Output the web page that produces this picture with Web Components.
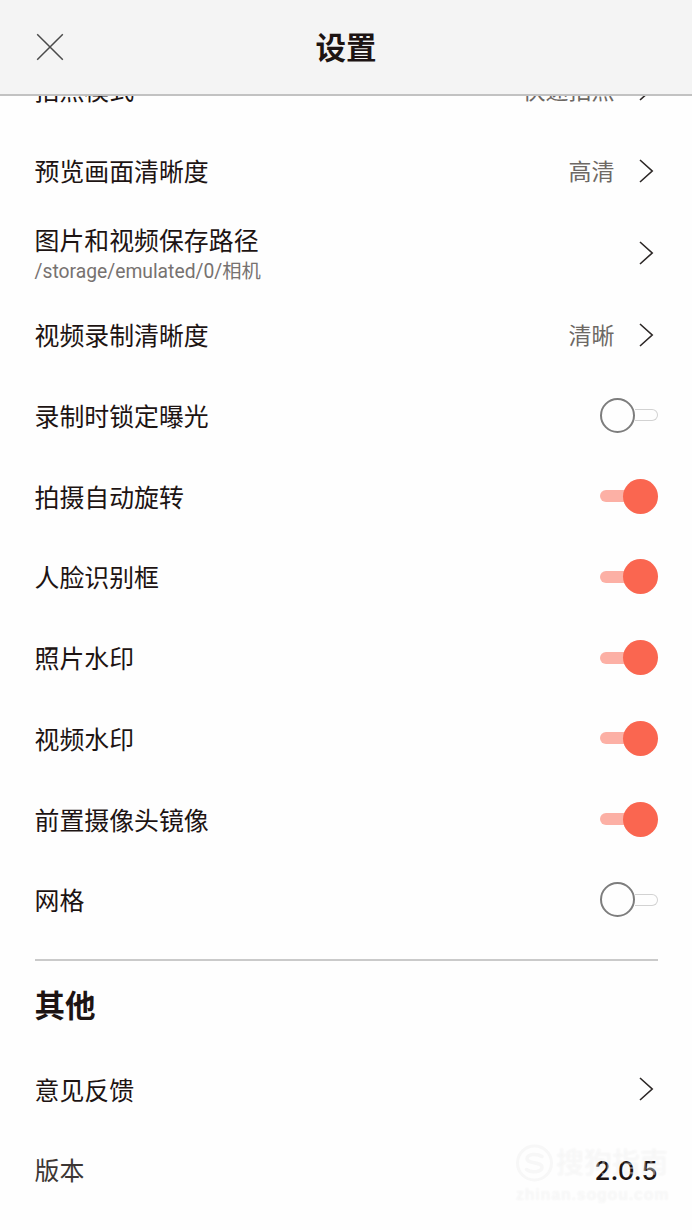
<!DOCTYPE html>
<html lang="zh-CN">
<head>
<meta charset="utf-8">
<title>设置</title>
<style>
  body {
    margin: 0;
    background: #fefefe;
    color: #1d1413;
    font-family: Roboto, "Noto Sans CJK SC", sans-serif;
  }
</style>
</head>
<body>
<settings-page>
  <settings-header slot="header">设置</settings-header>
  <setting-row class="first" arrow value="快速拍照">拍照模式</setting-row>
  <setting-row arrow value="高清">预览画面清晰度</setting-row>
  <setting-row class="tall" arrow sub="/storage/emulated/0/相机">图片和视频保存路径</setting-row>
  <setting-row arrow value="清晰">视频录制清晰度</setting-row>
  <setting-row>录制时锁定曝光<toggle-switch slot="end"></toggle-switch></setting-row>
  <setting-row>拍摄自动旋转<toggle-switch slot="end" on></toggle-switch></setting-row>
  <setting-row>人脸识别框<toggle-switch slot="end" on></toggle-switch></setting-row>
  <setting-row>照片水印<toggle-switch slot="end" on></toggle-switch></setting-row>
  <setting-row>视频水印<toggle-switch slot="end" on></toggle-switch></setting-row>
  <setting-row>前置摄像头镜像<toggle-switch slot="end" on></toggle-switch></setting-row>
  <setting-row>网格<toggle-switch slot="end"></toggle-switch></setting-row>
  <section-title>其他</section-title>
  <setting-row arrow>意见反馈</setting-row>
  <setting-row muted version="2.0.5">版本</setting-row>
  <site-mark slot="mark"></site-mark>
</settings-page>

<script>
class SettingsPage extends HTMLElement {
  constructor() {
    super();
    this.attachShadow({ mode: 'open' }).innerHTML = `
      <style>
        :host {
          display: flex;
          flex-direction: column;
          position: relative;
          height: 1230px;
          overflow: hidden;
        }
        main {
          flex: 1;
          min-height: 0;
          overflow: hidden;
        }
        /* the list is scrolled part of a row under the header */
        .list {
          display: flex;
          flex-direction: column;
          margin-top: -48px;
          padding: 0 34.5px 0 34.5px;
        }
        ::slotted(.first) {
          height: 82.2px;
        }
        ::slotted(.tall) {
          height: 83.2px;
        }
      </style>
      <slot name="header"></slot>
      <main><div class="list"><slot></slot></div></main>
      <slot name="mark"></slot>
    `;
  }
}

class SettingsHeader extends HTMLElement {
  constructor() {
    super();
    this.attachShadow({ mode: 'open' }).innerHTML = `
      <style>
        :host {
          display: grid;
          grid-template-columns: 100px 1fr 100px;
          align-items: center;
          flex: none;
          box-sizing: border-box;
          height: 96px;
          background: #f4f4f4;
          border-bottom: 2px solid #c2c2c2;
        }
        svg {
          justify-self: center;
        }
        h1 {
          margin: 0;
          padding-top: 4px;
          text-align: center;
          font-size: 30.5px;
          line-height: 44px;
          font-weight: 700;
        }
      </style>
      <svg width="28" height="28" viewBox="0 0 28 28" fill="none" stroke="#4a4a4a" stroke-width="1.5">
        <path d="M1.2 1.2 26.8 26.8M26.8 1.2 1.2 26.8"/>
      </svg>
      <h1><slot></slot></h1>
    `;
  }
}

class SettingRow extends HTMLElement {
  constructor() {
    super();
    this.attachShadow({ mode: 'open' });
  }

  connectedCallback() {
    const sub = this.getAttribute('sub');
    const value = this.getAttribute('value');
    const version = this.getAttribute('version');
    this.shadowRoot.innerHTML = `
      <style>
        :host {
          display: flex;
          align-items: center;
          flex: none;
          height: 80.75px;
        }
        .text {
          flex: 1;
          padding-top: 5px;
        }
        .label {
          font-size: 24.9px;
          line-height: 34px;
        }
        :host([muted]) .label {
          color: #3c3634;
        }
        .sub {
          color: #777270;
          font-size: 19.3px;
          line-height: 26px;
        }
        .value {
          padding-top: 5px;
          color: #6d6864;
          font-size: 23px;
          line-height: 32px;
        }
        .version {
          padding-top: 2px;
          font-family: Inter, sans-serif;
          font-size: 26px;
          font-weight: 500;
        }
        .arrow {
          margin: 0 4px 0 24px;
        }
      </style>
      <div class="text">
        <div class="label"><slot></slot></div>
        ${sub ? `<div class="sub">${sub}</div>` : ''}
      </div>
      ${value ? `<span class="value">${value}</span>` : ''}
      ${version ? `<span class="version">${version}</span>` : ''}
      ${this.hasAttribute('arrow') ? `
        <svg class="arrow" width="15" height="24" viewBox="0 0 15 24" fill="none" stroke="#2b2625" stroke-width="1.6">
          <path d="M1 1 13.2 12 1 23"/>
        </svg>` : ''}
      <slot name="end"></slot>
    `;
  }
}

class ToggleSwitch extends HTMLElement {
  constructor() {
    super();
    this.attachShadow({ mode: 'open' }).innerHTML = `
      <style>
        :host {
          display: flex;
          align-items: center;
          width: 58px;
          height: 35px;
        }
        .knob {
          box-sizing: border-box;
          flex: none;
          width: 35px;
          height: 35px;
          border: 2px solid #7d7d7d;
          border-radius: 50%;
        }
        .track {
          box-sizing: border-box;
          flex: 1;
          height: 12px;
          border: 1px solid #d2d2d2;
          border-left: 0;
          border-radius: 0 6px 6px 0;
        }
        :host([on]) {
          flex-direction: row-reverse;
        }
        :host([on]) .knob {
          background: #fa6650;
          border: 0;
          z-index: 1;
        }
        :host([on]) .track {
          margin-right: -2px;
          background: #fcb0a5;
          border: 0;
          border-radius: 6px 0 0 6px;
        }
      </style>
      <div class="knob"></div>
      <div class="track"></div>
    `;
  }
}

class SectionTitle extends HTMLElement {
  constructor() {
    super();
    this.attachShadow({ mode: 'open' }).innerHTML = `
      <style>
        :host {
          display: block;
          flex: none;
          box-sizing: border-box;
          height: 89.5px;
          margin-top: 19px;
          padding-top: 24px;
          border-top: 2px solid #cacaca;
        }
        h2 {
          margin: 0;
          font-size: 30.5px;
          line-height: 44px;
          font-weight: 700;
        }
      </style>
      <h2><slot></slot></h2>
    `;
  }
}

class SiteMark extends HTMLElement {
  constructor() {
    super();
    this.attachShadow({ mode: 'open' }).innerHTML = `
      <style>
        /* pale stamp over the bottom right corner */
        :host {
          position: absolute;
          left: 515px;
          top: 1142px;
          width: 155px;
          color: rgba(255, 255, 255, 0.4);
          text-shadow: 0 0 2px rgba(0, 0, 0, 0.05);
        }
        .brand {
          display: flex;
          align-items: center;
          gap: 2px;
          font-size: 28px;
          line-height: 40px;
          font-weight: 500;
          white-space: nowrap;
        }
        .brand span {
          padding-top: 2px;
        }
        svg {
          flex: none;
        }
        .site {
          font: 700 16px/22px "Liberation Sans", sans-serif;
          letter-spacing: 0.8px;
          padding-left: 1px;
        }
      </style>
      <div class="brand">
        <svg width="39" height="40" viewBox="0 0 39 40" fill="none" stroke="#f7f7f7" stroke-linecap="round">
          <circle cx="19.5" cy="20" r="17" stroke-width="3"/>
          <path d="M27 13.5C22 10 12 11 12 15.8C12 21 27 18.5 27 24.3C27 29.5 16 30 11.5 26.5" stroke-width="3.5"/>
        </svg>
        <span>搜狗指南</span>
      </div>
      <div class="site">zhinan.sogou.com</div>
    `;
  }
}

customElements.define('settings-page', SettingsPage);
customElements.define('settings-header', SettingsHeader);
customElements.define('setting-row', SettingRow);
customElements.define('toggle-switch', ToggleSwitch);
customElements.define('section-title', SectionTitle);
customElements.define('site-mark', SiteMark);
</script>
</body>
</html>
